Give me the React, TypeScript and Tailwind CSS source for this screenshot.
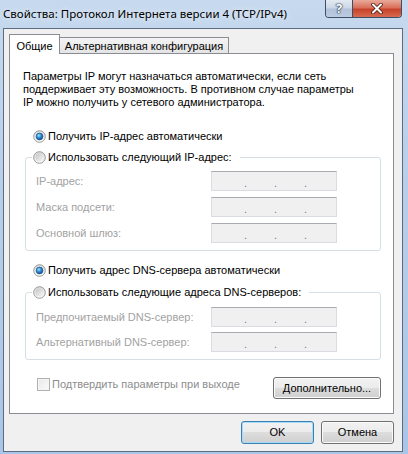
import React from "react";

const Radio = ({ checked }: { checked: boolean }) => (
  <svg width="13" height="13" viewBox="0 0 13 13" className="shrink-0">
    <defs>
      <linearGradient id="rOuter" x1="0" y1="0" x2="0" y2="1">
        <stop offset="0" stopColor="#d8d8d8" />
        <stop offset="1" stopColor="#fbfbfb" />
      </linearGradient>
      <linearGradient id="rInner" x1="0" y1="0" x2="1" y2="1">
        <stop offset="0" stopColor="#c4c4c4" />
        <stop offset="1" stopColor="#f8f8f8" />
      </linearGradient>
      <radialGradient id="rDot" cx="0.4" cy="0.35" r="0.7">
        <stop offset="0" stopColor="#a8e4fb" />
        <stop offset="0.45" stopColor="#2f93d8" />
        <stop offset="1" stopColor="#0b3f8c" />
      </radialGradient>
    </defs>
    <circle cx="6.5" cy="6.5" r="5.8" fill="url(#rOuter)" stroke="#8e8f8f" strokeWidth="0.9" />
    {checked ? (
      <circle cx="6.5" cy="6.5" r="3.4" fill="url(#rDot)" stroke="#1b4f80" strokeWidth="0.6" />
    ) : (
      <circle cx="6.5" cy="6.5" r="4" fill="url(#rInner)" />
    )}
  </svg>
);

const IpField = () => (
  <div className="flex h-[20px] w-[126px] items-start border border-[#d9dde2] border-t-[#a9abb0] bg-[#f0f0f0] pl-[32px] pt-[6px] text-[11px] leading-[11px] text-[#75759a]">
    <span className="w-[30px]">.</span>
    <span className="w-[30px]">.</span>
    <span className="w-[30px]">.</span>
  </div>
);

const Row = ({ label }: { label: string }) => (
  <div className="flex h-[20px] items-center pl-[10px]">
    <span className="w-[175px] whitespace-nowrap text-[#a2a2a2]">{label}</span>
    <IpField />
  </div>
);

const WinButton = ({ children, w, primary }: { children: React.ReactNode; w: string; primary?: boolean }) => (
  <div
    className={
      "flex items-center justify-center rounded-[3px] border bg-[linear-gradient(to_bottom,#f2f2f2_0%,#ebebeb_50%,#dddddd_50%,#cfcfcf_100%)] text-black " +
      w +
      (primary
        ? " border-[#3c7fb1] shadow-[inset_0_0_0_1px_#a6dcf8]"
        : " border-[#707070] shadow-[inset_0_0_0_1px_#fbfbfb]")
    }
  >
    {children}
  </div>
);

export default function App() {
  return (
    <div className="flex h-[454px] w-[408px] flex-col bg-[linear-gradient(to_bottom,#c6d9ee_0%,#b8cfea_40%,#a9c5e7_100%)] font-['Liberation_Sans',Arial,sans-serif] text-[11px] leading-[13px] text-black">
      {/* Title bar */}
      <div className="flex h-[28px] justify-between">
        <div className="pl-[3px] pt-[7px] font-['Noto_Sans',sans-serif] text-[11.5px] leading-[14px] whitespace-nowrap [text-shadow:0_0_6px_#ffffff]">
          Свойства: Протокол Интернета версии 4 (TCP/IPv4)
        </div>
        <div className="mr-[6px] flex h-[18px] overflow-hidden rounded-b-[4px] border border-t-0 border-[#3d4e68]">
          <div className="flex w-[27px] items-center justify-center border-r border-[#3d4e68] bg-[linear-gradient(to_bottom,#e3eaf3_0%,#cdd8e6_45%,#b2c2d8_55%,#bccbe0_100%)] font-['Noto_Sans',sans-serif] text-[13px] font-bold text-white [text-shadow:0_0_1px_#1f2d45,0_0_1px_#1f2d45,0_0_2px_#1f2d45]">
            ?
          </div>
          <div className="flex w-[48px] items-center justify-center bg-[linear-gradient(to_bottom,#e9a99a_0%,#d9705a_45%,#c7432b_55%,#d66a50_100%)]">
            <svg width="14" height="11" viewBox="0 0 14 11">
              <path d="M3 1.5 L11 9.5 M11 1.5 L3 9.5" stroke="#4a1a12" strokeWidth="3.6" strokeLinecap="round" />
              <path d="M3 1.5 L11 9.5 M11 1.5 L3 9.5" stroke="#ffffff" strokeWidth="2" strokeLinecap="round" />
            </svg>
          </div>
        </div>
      </div>

      {/* Client area */}
      <div className="ml-[3px] flex h-[424px] w-[400px] flex-col border border-[#5b6b80] bg-[#f0f0f0] pl-[5px] pt-[5px]">
        {/* Tabs */}
        <div className="relative z-10 -mb-[1px] flex h-[20px] items-end">
          <div className="flex h-[20px] w-[51px] justify-center border border-b-0 border-[#898c95] bg-white pt-[5px]">
            Общие
          </div>
          <div className="mb-[1px] flex h-[16px] w-[169px] justify-center border-r border-t border-[#898c95] bg-[linear-gradient(to_bottom,#f4f4f4,#e4e4e4)] pt-[2px] whitespace-nowrap">
            Альтернативная конфигурация
          </div>
        </div>

        {/* Panel */}
        <div className="flex h-[361px] w-[385px] flex-col border border-[#898c95] bg-white">
          <p className="mt-[16px] pl-[13px] leading-[13px] whitespace-nowrap">
            Параметры IP могут назначаться автоматически, если сеть
            <br />
            поддерживает эту возможность. В противном случае параметры
            <br />
            IP можно получить у сетевого администратора.
          </p>

          <div className="mt-[19px] flex h-[16px] items-center gap-[2px] pl-[23px]">
            <Radio checked />
            <span className="whitespace-nowrap">Получить IP-адрес автоматически</span>
          </div>

          <div className="ml-[15px] mt-[13px] flex h-[94px] w-[356px] flex-col rounded-[3px] border border-[#d5dfe5]">
            <div className="-mt-[9px] ml-[6px] flex h-[16px] w-fit items-center gap-[2px] bg-white pl-[1px] pr-[8px]">
              <Radio checked={false} />
              <span className="whitespace-nowrap">Использовать следующий IP-адрес:</span>
            </div>
            <div className="mt-[6px] flex flex-col gap-[6px]">
              <Row label="IP-адрес:" />
              <Row label="Маска подсети:" />
              <Row label="Основной шлюз:" />
            </div>
          </div>

          <div className="mt-[11px] flex h-[16px] items-center gap-[2px] pl-[23px]">
            <Radio checked />
            <span className="whitespace-nowrap">Получить адрес DNS-сервера автоматически</span>
          </div>

          <div className="ml-[15px] mt-[14px] flex h-[68px] w-[356px] flex-col rounded-[3px] border border-[#d5dfe5]">
            <div className="-mt-[9px] ml-[6px] flex h-[16px] w-fit items-center gap-[2px] bg-white pl-[1px] pr-[8px]">
              <Radio checked={false} />
              <span className="whitespace-nowrap">Использовать следующие адреса DNS-серверов:</span>
            </div>
            <div className="mt-[7px] flex flex-col gap-[5px]">
              <Row label="Предпочитаемый DNS-сервер:" />
              <Row label="Альтернативный DNS-сервер:" />
            </div>
          </div>

          <div className="mt-[17px] flex h-[22px] items-start justify-between">
            <div className="ml-[27px] mt-[1px] flex items-center gap-[2px]">
              <div className="h-[13px] w-[13px] border border-[#b1b1b1] bg-[linear-gradient(135deg,#e9e9e9,#fafafa)] shadow-[inset_0_0_0_1px_#f4f4f4]" />
              <span className="whitespace-nowrap text-[#8d8d8d]">Подтвердить параметры при выходе</span>
            </div>
            <div className="mr-[12px] flex">
              <WinButton w="h-[22px] w-[108px]">Дополнительно...</WinButton>
            </div>
          </div>
        </div>

        {/* Buttons */}
        <div className="mt-[7px] flex justify-end gap-[7px] pr-[8px]">
          <WinButton w="h-[23px] w-[73px]" primary>
            OK
          </WinButton>
          <WinButton w="h-[23px] w-[73px]">Отмена</WinButton>
        </div>
      </div>
    </div>
  );
}
